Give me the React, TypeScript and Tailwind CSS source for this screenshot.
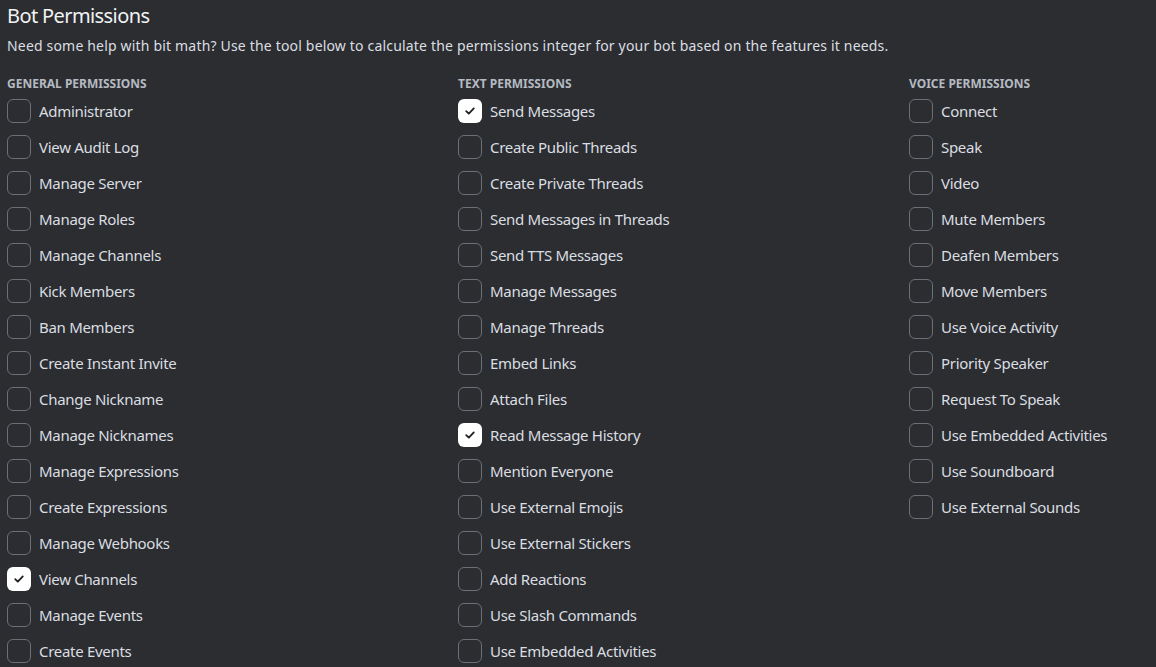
import React from "react";

const general = [
  ["Administrator", false],
  ["View Audit Log", false],
  ["Manage Server", false],
  ["Manage Roles", false],
  ["Manage Channels", false],
  ["Kick Members", false],
  ["Ban Members", false],
  ["Create Instant Invite", false],
  ["Change Nickname", false],
  ["Manage Nicknames", false],
  ["Manage Expressions", false],
  ["Create Expressions", false],
  ["Manage Webhooks", false],
  ["View Channels", true],
  ["Manage Events", false],
  ["Create Events", false],
] as [string, boolean][];

const text = [
  ["Send Messages", true],
  ["Create Public Threads", false],
  ["Create Private Threads", false],
  ["Send Messages in Threads", false],
  ["Send TTS Messages", false],
  ["Manage Messages", false],
  ["Manage Threads", false],
  ["Embed Links", false],
  ["Attach Files", false],
  ["Read Message History", true],
  ["Mention Everyone", false],
  ["Use External Emojis", false],
  ["Use External Stickers", false],
  ["Add Reactions", false],
  ["Use Slash Commands", false],
  ["Use Embedded Activities", false],
] as [string, boolean][];

const voice = [
  ["Connect", false],
  ["Speak", false],
  ["Video", false],
  ["Mute Members", false],
  ["Deafen Members", false],
  ["Move Members", false],
  ["Use Voice Activity", false],
  ["Priority Speaker", false],
  ["Request To Speak", false],
  ["Use Embedded Activities", false],
  ["Use Soundboard", false],
  ["Use External Sounds", false],
] as [string, boolean][];

function Box({ checked }: { checked: boolean }) {
  if (checked) {
    return (
      <div className="w-[24px] h-[24px] rounded-[6px] bg-white flex items-center justify-center shrink-0">
        <svg width="12" height="12" viewBox="0 0 12 12" fill="none">
          <path d="M2.2 6.2 L4.8 8.6 L9.8 3.4" stroke="#1e1f22" strokeWidth="1.8" strokeLinecap="round" strokeLinejoin="round" />
        </svg>
      </div>
    );
  }
  return <div className="w-[24px] h-[24px] rounded-[6px] border border-[#6d6f78] shrink-0" />;
}

function Column({ title, items }: { title: string; items: [string, boolean][] }) {
  return (
    <div className="w-[451px] shrink-0 flex flex-col">
      <div className="h-[12px] flex items-center text-[12px] font-bold text-[#b5bac1] uppercase leading-[12px]">
        {title}
      </div>
      <div className="flex flex-col mt-[3px]">
        {items.map(([label, checked]) => (
          <div key={label} className="h-[36px] flex items-center gap-[8px]">
            <Box checked={checked} />
            <span className="text-[15px] text-[#dbdee1] leading-[20px] tracking-[-0.3px]">{label}</span>
          </div>
        ))}
      </div>
    </div>
  );
}

export default function App() {
  return (
    <div
      className="w-[1156px] h-[667px] overflow-hidden bg-[#2b2d31] pl-[7px]"
      style={{ fontFamily: '"Noto Sans", "Open Sans", sans-serif' }}
    >
      <div className="pt-[4px] text-[20px] leading-[24px] text-[#f2f3f5] font-normal tracking-[-0.6px]">Bot Permissions</div>
      <div className="mt-[9px] text-[14px] leading-[18px] text-[#dbdee1] tracking-[0.18px]">
        Need some help with bit math? Use the tool below to calculate the permissions integer for your bot based on the features it needs.
      </div>
      <div className="flex mt-[23px]">
        <Column title="General Permissions" items={general} />
        <Column title="Text Permissions" items={text} />
        <Column title="Voice Permissions" items={voice} />
      </div>
    </div>
  );
}
